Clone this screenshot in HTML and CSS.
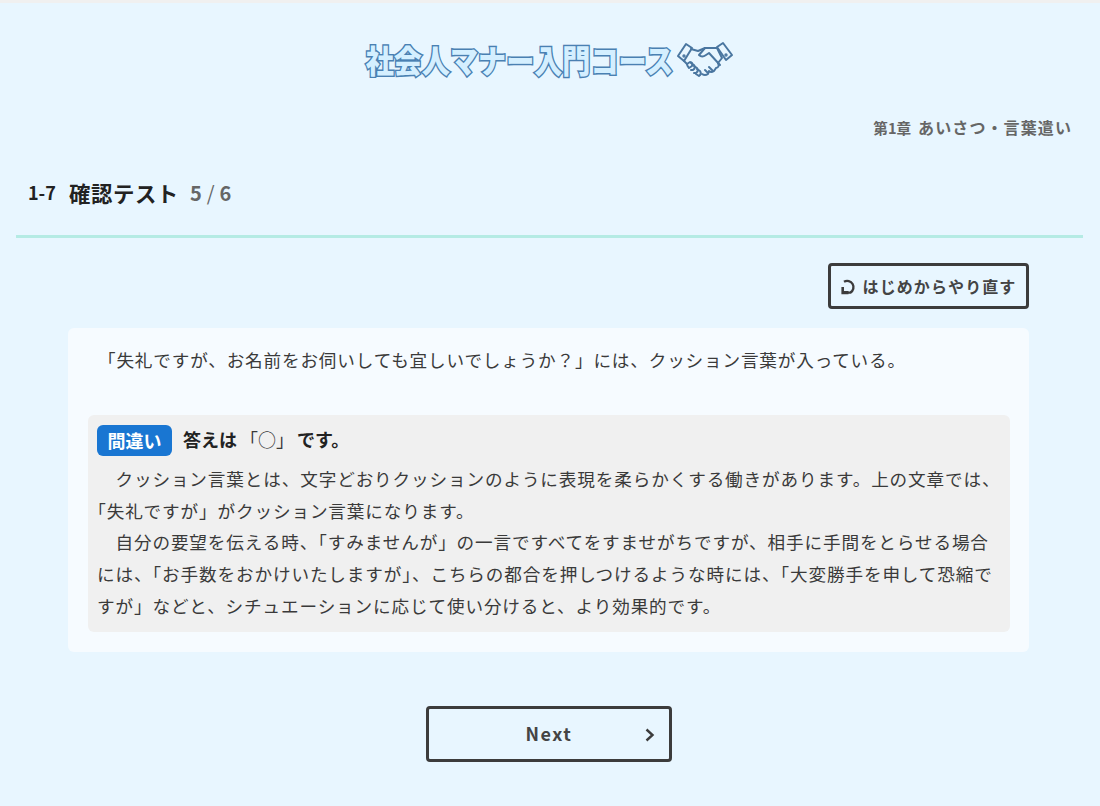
FILE: index.html
```html
<!DOCTYPE html>
<html lang="ja">
<head>
<meta charset="utf-8">
<title>社会人マナー入門コース</title>
<link rel="stylesheet" href="styles.css">
</head>
<body>
<header class="site-header">
  <div class="logo">
    <span class="logo-text">社会人マナー入門コース</span>
    <svg class="logo-icon" viewBox="0 0 58 38" width="58" height="38" fill="none" stroke="#4a76a0" stroke-width="2" stroke-linejoin="round" stroke-linecap="round">
      <path d="M2 15 L10 3 L16 7 L8 20 Z"/>
      <path d="M56 14 L47 2 L41 6 L50 19 Z"/>
      <path d="M15 8 L22 10 L29 7 L41 7 L46 17 L42 22"/>
      <path d="M29 7 L23 14 Q26 17 30 14 L33 12 L44 24"/>
      <path d="M8 20 L11 23"/>
      <path d="M42 22 Q44 26 40 27 L38 30 Q35 32 33 30 L32 33 Q29 35 26 33"/>
      <path d="M11 23 L14 21 Q17 21 16 25 L13 27 Q11 25 11 23 Z"/>
      <path d="M15 22 L18 24 Q20 27 17 29 L15 29"/>
      <path d="M18 25 L21 27 Q23 30 20 32 L18 32"/>
      <path d="M21 28 L24 30 Q26 33 23 35 L20 33"/>
      <path d="M37 30 L33 26"/>
      <path d="M32 32 L29 29"/>
      <circle cx="8" cy="15" r="0.7"/>
      <circle cx="50" cy="14" r="0.7"/>
    </svg>
  </div>
  <p class="chapter"><span class="chapter-no">第1章</span>あいさつ・言葉遣い</p>
</header>

<main class="page">
  <h1 class="title"><span class="title-no">1-7</span>確認テスト<span class="title-count">5<span class="title-slash">/</span>6</span></h1>
  <div class="toolbar">
    <a class="btn-restart">
      <svg class="restart-icon" viewBox="0 0 17 17" width="17" height="17" fill="none" stroke="#3c3c3c" stroke-width="2.4">
        <path d="M3 3.8 A6.2 6.2 0 1 1 9.4 14.6 L4 14.6"/>
        <path d="M0.4 9 H3 V13 H7.5 V16.2 H0.4 Z" fill="#3c3c3c" stroke="none"/>
      </svg>はじめからやり直す</a>
  </div>
  <section class="card">
    <p class="question">「失礼ですが、お名前をお伺いしても宜しいでしょうか？」には、クッション言葉が入っている。</p>
    <div class="answer">
      <div class="answer-head"><span class="badge">間違い</span><span class="answer-text">答えは<span class="answer-mark">「○」</span>です。</span></div>
      <p class="explain">　クッション言葉とは、文字どおりクッションのように表現を柔らかくする働きがあります。上の文章では、<span class="trim">「失礼ですが」がクッション言葉になります。</span><br>　自分の要望を伝える時、「すみませんが」の一言ですべてをすませがちですが、相手に手間をとらせる場合には、「お手数をおかけいたしますが」、こちらの都合を押しつけるような時には、「大変勝手を申して恐縮ですが」などと、シチュエーションに応じて使い分けると、より効果的です。</p>
    </div>
  </section>
  <div class="next-wrap">
    <a class="btn-next"><span class="next-label">Next</span>
      <svg class="next-icon" viewBox="0 0 12 14" width="12" height="14" fill="none" stroke="#3c3c3c" stroke-width="2.4"><path d="M2.5 1.5 L8.5 7 L2.5 12.5"/></svg>
    </a>
  </div>
</main>
</body>
</html>
```
FILE: styles.css
```css
* { box-sizing: border-box; }
html, body { margin: 0; padding: 0; }
body {
  height: 806px;
  overflow: hidden;
  background: #e8f6ff;
  border-top: 3px solid #f0f0f0;
  color: #333;
  font-family: "Noto Sans CJK JP", "Noto Sans", sans-serif;
}
.site-header { padding: 0 28px 0 16px; }
.logo {
  display: flex;
  justify-content: center;
  align-items: center;
  gap: 3px;
  height: 112px;
  padding: 2px 0 0 12px;
}
.logo-text {
  display: block;
  margin-top: -2px;
  font-size: 28.1px;
  font-weight: 900;
  line-height: 1;
  color: #d4efff;
  -webkit-text-stroke: 2.6px #4a80b2;
  paint-order: stroke fill;
  white-space: nowrap;
  transform: scaleY(1.14);
}
.logo-icon { display: block; flex: none; }
.chapter {
  margin: -1px 0 0;
  text-align: right;
  font-size: 16px;
  font-weight: 700;
  line-height: 26px;
  color: #666;
  letter-spacing: 1.1px;
}
.chapter-no { font-size: 14.6px; margin-right: 7px; letter-spacing: 0; }
.page { padding: 0 17px 0 16px; }
.title {
  margin: 34px 0 0;
  padding: 0 0 25px 12px;
  box-sizing: content-box;
  height: 35px;
  border-bottom: 3px solid #b5ebe4;
  font-size: 21.4px;
  font-weight: 700;
  line-height: 35px;
  color: #222;
  letter-spacing: 0.6px;
  display: flex;
  align-items: center;
}
.title-no { font-size: 18px; margin-right: 13px; letter-spacing: 0; }
.title-count { font-size: 20px; color: #666; margin-left: 11px; letter-spacing: 0; font-weight: 700; }
.title-slash { font-weight: 400; margin: 0 5px; }
.toolbar { display: flex; justify-content: flex-end; padding: 25px 54px 0 0; }
.btn-restart {
  display: flex;
  align-items: center;
  justify-content: center;
  gap: 5px;
  width: 201px;
  height: 46px;
  border: 3px solid #3c3c3c;
  border-radius: 4px;
  font-size: 16px;
  font-weight: 700;
  letter-spacing: 1.1px;
  color: #444;
}
.restart-icon { flex: none; }
.card {
  margin: 19px 54px 0 52px;
  padding: 16px 19px 20px 20px;
  background: #f6fbff;
  border-radius: 6px;
}
.question {
  margin: 0 0 39px;
  padding-left: 10px;
  font-size: 17.6px;
  line-height: 32px;
  letter-spacing: 0.84px;
  color: #3a3a3a;
}
.answer {
  background: #f0f0f0;
  border-radius: 6px;
  padding: 9px 9px 10px 9px;
}
.answer-head { display: flex; align-items: center; gap: 11px; height: 32px; }
.badge {
  display: block;
  background: #1976d2;
  color: #fff;
  border-radius: 6px;
  width: 75px;
  height: 31px;
  line-height: 30px;
  text-align: center;
  font-size: 18px;
  font-weight: 700;
}
.answer-text { font-size: 18px; font-weight: 700; color: #222; margin-top: -2px; }
.answer-mark { font-weight: 400; color: #3a3a3a; margin: 0 3px; }
.explain {
  margin: 7px 0 0;
  font-size: 17.6px;
  line-height: 31.7px;
  letter-spacing: 0.88px;
  color: #3a3a3a;
}
.trim { text-spacing-trim: trim-start; }
.next-wrap { display: flex; justify-content: center; padding: 54px 0 0 0; margin-left: -1px; }
.btn-next {
  display: flex;
  align-items: center;
  justify-content: center;
  position: relative;
  width: 246px;
  height: 56px;
  border: 3px solid #3c3c3c;
  border-radius: 4px;
  font-size: 18px;
  font-weight: 700;
  letter-spacing: 1.5px;
  color: #444;
}
.next-label { margin-top: -2px; }
.next-icon { position: absolute; right: 13px; top: 19px; }
```
